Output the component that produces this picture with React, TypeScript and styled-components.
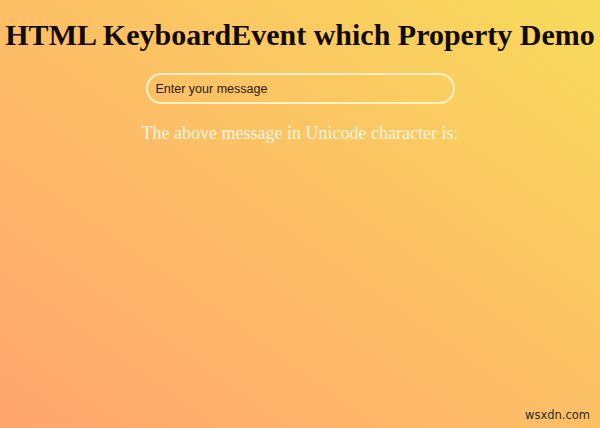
import React from 'react';
import styled, { createGlobalStyle } from 'styled-components';

const GlobalStyle = createGlobalStyle`
    html, body {
        margin: 0;
        padding: 0;
    }
    body {
        font-family: 'Liberation Serif', 'Times New Roman', serif;
    }
`;

const Page = styled.div`
    position: relative;
    width: 600px;
    height: 428px;
    overflow: hidden;
    background: linear-gradient(to top right, #ffa56f 0%, #fdbf66 50%, #f7db5b 100%);
    display: flex;
    flex-direction: column;
    align-items: center;
`;

const Title = styled.h1`
    margin: 17px 0 0;
    font-family: 'Liberation Serif', 'Times New Roman', serif;
    font-size: 30px;
    font-weight: 700;
    line-height: 36px;
    color: #140a05;
    white-space: nowrap;
`;

const MessageInput = styled.input`
    box-sizing: border-box;
    margin-top: 20px;
    width: 309px;
    height: 31px;
    padding: 0 8px;
    border: 2px solid #fff1c4;
    border-radius: 16px;
    background: transparent;
    font-family: 'Liberation Sans', Arial, sans-serif;
    font-size: 12.5px;
    color: #2a1a10;
    outline: none;

    &::placeholder {
        color: #2a1a10;
    }
`;

const Caption = styled.p`
    margin: 18px 0 0;
    font-family: 'Liberation Serif', 'Times New Roman', serif;
    font-size: 18px;
    line-height: 22px;
    color: #fff6e0;
`;

const Watermark = styled.span`
    position: absolute;
    right: 10px;
    bottom: 6px;
    font-family: 'DejaVu Sans', 'Liberation Sans', sans-serif;
    font-size: 11.5px;
    color: #2b2b2b;
`;

export default function App() {
    return (
        <>
            <GlobalStyle />
            <Page>
                <Title>HTML KeyboardEvent which Property Demo</Title>
                <MessageInput placeholder='Enter your message' />
                <Caption>The above message in Unicode character is:</Caption>
                <Watermark>wsxdn.com</Watermark>
            </Page>
        </>
    );
}
